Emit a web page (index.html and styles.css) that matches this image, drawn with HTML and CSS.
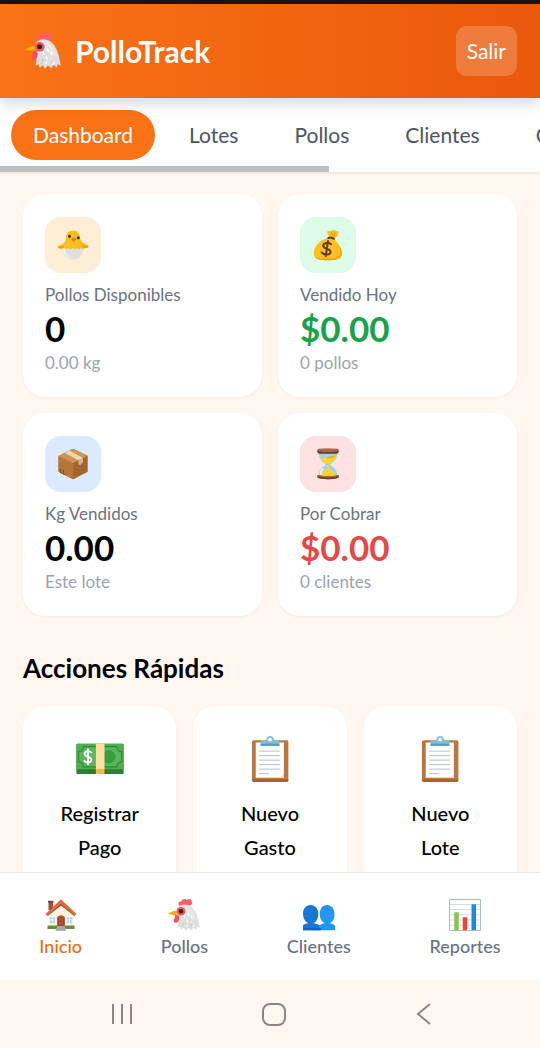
FILE: index.html
```html
<!DOCTYPE html>
<html lang="es">
<head>
    <meta charset="UTF-8">
    <meta name="viewport" content="width=device-width, initial-scale=1.0">
    <title>PolloTrack</title>
    <link rel="stylesheet" href="styles.css">
</head>
<body>
    <!-- Shared icons -->
    <svg class="sprite" aria-hidden="true">
        <symbol id="hen" viewBox="0 0 128 128">
            <path d="M46 28c-9-8-4-20 7-18 2-11 19-13 22-5 6-8 20-5 19 5 7 9-3 19-14 17z" fill="#ff5d68"/>
            <path d="M38 38c8-18 36-22 55-6 15 13 20 27 25 42 4 12 6 25 9 42l-11-5-3 12-12-9-8 12-11-11-11 12-8-13-11 10-4-14-10 6c4-16 3-26 0-39z" fill="#dedede"/>
            <path d="M52 30c16-8 35 0 44 14 8 14 12 25 16 40-15-9-37-15-46-25z" fill="#e8e8e8"/>
            <path d="M64 66l3 10M80 58l3 7M92 68l3 9M76 84l3 9M94 90l3 8M78 104l-4 6M104 104l-4 6" stroke="#fff" stroke-width="5" stroke-linecap="round" fill="none"/>
            <path d="M96 88c2 10-2 19-8 24M62 92c2 8-2 15-7 19" stroke="#c6c6c6" stroke-width="3" fill="none"/>
            <path d="M27 62c12-2 18 4 18 13 0 11-5 20-13 20-9 0-11-9-6-17 2-4 2-8 1-16z" fill="#f44f5c"/>
            <ellipse cx="52" cy="49" rx="18" ry="17" fill="#ef5763"/>
            <path d="M0 61c9-9 21-15 34-14 4 7 2 14-3 18-9-3-20-3-31-4z" fill="#ffb300"/>
            <path d="M4 60c10 0 20 0 29-3l-1 7c-9-2-18-3-28-4z" fill="#f28c00"/>
            <circle cx="52" cy="49" r="9" fill="#372624"/>
        </symbol>
        <symbol id="chick" viewBox="0 0 128 128">
            <path d="M20 72c1 28 18 50 44 50s44-22 45-50z" fill="#e0e0e0"/>
            <path d="M31 80c3 18 12 30 26 36-13 0-33-14-37-42z" fill="#f5f5f5"/>
            <path d="M36 40C36 18 46 6 64 6s28 12 28 32c4 14 16 20 33 28 4 9-8 13-15 9-3 7-11 7-15 1-4 7-12 7-16 0-4 6-12 6-16 0-5 7-13 7-17 0-4 6-12 6-16 0-8 5-29 3-27-7 16-6 30-12 33-29z" fill="#fdbf1c"/>
            <path d="M3 70c9 1 19-1 27-6l-4 11c-9 5-25 4-23-5zm122-3c-9 1-19-1-27-6l5 12c9 5 24 3 22-6z" fill="#f59e0b"/>
            <circle cx="50" cy="29" r="6" fill="#3b2c28"/>
            <circle cx="85" cy="35" r="6" fill="#3b2c28"/>
            <path d="M56 40c7-6 16-5 21 2-5 3-8 9-11 9s-6-6-10-11z" fill="#ff6d2e"/>
        </symbol>
        <symbol id="moneybag" viewBox="0 0 128 128">
            <path d="M68 32c-3-8-11-20-5-24 5-4 10 3 15-1 5-5 10-6 15 0 4 4 9-1 12 3 3 6-2 9-2 14 1 5-3 8-8 9l-5 9z" fill="#fdc01f"/>
            <path d="M77 12l8 17M92 13l-4 18" stroke="#d59a12" stroke-width="4" fill="none"/>
            <path d="M64 36c-27 5-58 31-57 61 0 20 12 28 55 28 40 0 57-5 57-27 0-28-17-43-31-58z" fill="#fdc01f"/>
            <path d="M108 67c7 10 11 20 11 31 0 22-17 27-57 27-26 0-41-3-49-11 35 8 91 9 97-10 3-11 1-26-2-37z" fill="#f3a51c"/>
            <path d="M63 33c8-6 20-3 28 4 3 3 0 8-4 6-8-4-14-5-21-3-5 1-7-4-3-7z" fill="#68423a"/>
            <path d="M76 61c-10-9-29-7-31 5-2 16 28 10 29 25 1 14-24 15-35 3M64 48l-9 60" stroke="#5d3b33" stroke-width="8" stroke-linecap="round" fill="none"/>
        </symbol>
        <symbol id="box" viewBox="0 0 128 128">
            <path d="M64 3l58 28v64l-58 30L6 95V32z" fill="#ba793e"/>
            <path d="M6 32l58 28v65L6 95z" fill="#b87436"/>
            <path d="M122 31L64 60v65l58-30z" fill="#a36631"/>
            <path d="M64 3l58 28-58 29L6 32z" fill="#ce9254"/>
            <path d="M49 10L32 20l54 29 18-9z" fill="#f3d7ac"/>
            <path d="M86 49l18-9v20l-6 1-4 7-8-2z" fill="#d6b591"/>
            <path d="M15 83v14M26 87v15M12 98l20 9" stroke="#775033" stroke-width="4" fill="none"/>
        </symbol>
        <symbol id="hourglass" viewBox="0 0 128 128">
            <path d="M27 18h74c0 22-9 34-26 44v8c17 10 27 22 27 45H26c0-23 9-35 27-45v-8C36 52 27 40 27 18z" fill="#9bd2ec"/>
            <path d="M34 41l62-11c-2 17-11 24-27 32H59c-13-6-21-11-25-21zM61 65h6l3 19c13 8 23 15 27 29H31c5-15 16-22 28-29z" fill="#fed22f"/>
            <path d="M52 37l43-7c-5 10-23 14-43 7z" fill="#e5ae21"/>
            <path d="M43 84c-6 6-8 12-8 20" stroke="#e1f4fd" stroke-width="8" fill="none" stroke-linecap="round"/>
            <rect x="21" y="3" width="86" height="20" rx="9" fill="#5e4038"/>
            <ellipse cx="64" cy="9" rx="42" ry="7" fill="#af6840"/>
            <path d="M21 109c20 7 66 7 86 0v9c-12 10-74 10-86 0z" fill="#6b4336"/>
            <path d="M22 107c23 7 61 7 84 0v5c-20 7-64 7-84 0z" fill="#b46b43"/>
        </symbol>
        <symbol id="banknote" viewBox="0 0 128 128">
            <rect x="1" y="23" width="126" height="81" rx="3" fill="#2e7d32"/>
            <rect x="1" y="23" width="126" height="68" rx="3" fill="#4caf50"/>
            <path d="M20 31h89c0 8 5 13 13 14v26c-8 1-13 6-13 14H20c0-8-5-13-13-14V45c8-1 13-6 13-14z" fill="#58b65b" stroke="#2f8735" stroke-width="3"/>
            <circle cx="87" cy="58" r="18" fill="#389d42"/>
            <path d="M53 23h23v68H53z" fill="#ffe0a0"/>
            <path d="M53 91h23v13H53z" fill="#ffb74d"/>
            <path d="M41 47c-6-6-17-5-18 3-1 10 18 6 18 16 0 9-13 9-19 3M32 38v40" stroke="#fff" stroke-width="5" stroke-linecap="round" fill="none"/>
        </symbol>
        <symbol id="clipboard" viewBox="0 0 128 128">
            <rect x="16" y="14" width="97" height="111" rx="5" fill="#bd753f"/>
            <path d="M16 118h97v2c0 3-2 5-5 5H21c-3 0-5-2-5-5z" fill="#a9622f"/>
            <path d="M26 20h75v94H26z" fill="#fff"/>
            <path d="M91 114l10-10v10z" fill="#e0e0e0"/>
            <path d="M35 43h56M35 55h56M35 67h56M35 79h56M35 91h56M35 103h26" stroke="#aebdc7" stroke-width="2.500"/>
            <path d="M39 18c0-4 3-5 8-5h7c1-14 20-14 21 0h8c4 0 6 2 6 6v10H39z" fill="#82bfd1"/>
            <path d="M39 23h50v6H39z" fill="#5d9eb5"/>
            <circle cx="64" cy="12" r="5" fill="#fff"/>
        </symbol>
        <symbol id="house" viewBox="0 0 128 128">
            <path d="M14 10h18v34H14z" fill="#ad4c35"/>
            <path d="M12 7h22v8H12z" fill="#6d4c41"/>
            <path d="M15 60l49-48 50 48v59H15z" fill="#fff3dc"/>
            <path d="M10 106h108v14H10z" fill="#6b8e32"/>
            <path d="M64 1l62 59-6 6-56-48L8 66l-6-6z" fill="#de6a3c"/>
            <path d="M8 66l56-48 56 48-3 2-53-42L11 68z" fill="#9e4330"/>
            <path d="M48 111V76c0-15 32-15 32 0v35z" fill="#b95c39"/>
            <path d="M54 105V79c3-8 17-8 20 0v26zM64 73v32M54 88h20" stroke="#8b3e2b" stroke-width="3" fill="none"/>
            <path d="M17 70h25v29H17zM86 70h25v29H86z" fill="#a5dbe1" stroke="#fff" stroke-width="3"/>
            <path d="M29 70v29M17 84h25M98 70v29M86 84h25" stroke="#fff" stroke-width="3"/>
            <path d="M48 108h32v8h4v11H43v-11h5z" fill="#a6a6a6"/>
        </symbol>
        <symbol id="people" viewBox="0 0 128 128">
            <path d="M0 125v-17c1-8 12-9 21-11C8 91 0 78 0 59 0 38 12 24 30 24s31 14 31 35c0 20-8 33-20 38 9 2 23 3 30 12v16z" fill="#1976d2"/>
            <path d="M65 125v-17c4-8 15-9 21-12-12-5-19-17-19-35 0-22 11-37 29-37s30 15 30 37c0 18-7 31-19 36 8 2 20 4 21 13v15z" fill="#2196f3"/>
            <path d="M0 116h71v9H0z" fill="#1565c0"/>
        </symbol>
        <symbol id="chart" viewBox="0 0 128 128">
            <path d="M2 2h124v124H2z" fill="#fff" stroke="#90a4ae" stroke-width="3"/>
            <path d="M3 22h122M3 42h122M3 63h122M3 84h122M3 105h122" stroke="#b0bec5" stroke-width="2"/>
            <path d="M21 53h18v71H21z" fill="#8bc34a"/>
            <path d="M55 73h18v51H55z" fill="#f44336"/>
            <path d="M90 21h18v103H90z" fill="#1e88e5"/>
        </symbol>
    </svg>

    <div class="app">
        <header class="header">
            <h1 class="logo"><svg class="logo-icon"><use href="#hen"/></svg>PolloTrack</h1>
            <button type="button" class="logout">Salir</button>
        </header>

        <nav class="tabs">
            <button type="button" class="tab active">Dashboard</button>
            <button type="button" class="tab">Lotes</button>
            <button type="button" class="tab">Pollos</button>
            <button type="button" class="tab">Clientes</button>
            <button type="button" class="tab">C</button>
            <div class="scroll-thumb"></div>
        </nav>

        <main class="content">
            <section class="stats">
                <div class="stat-card">
                    <div class="stat-icon orange"><svg><use href="#chick"/></svg></div>
                    <div class="stat-label">Pollos Disponibles</div>
                    <div class="stat-value">0</div>
                    <div class="stat-sub">0.00 kg</div>
                </div>
                <div class="stat-card">
                    <div class="stat-icon green"><svg><use href="#moneybag"/></svg></div>
                    <div class="stat-label">Vendido Hoy</div>
                    <div class="stat-value text-green">$0.00</div>
                    <div class="stat-sub">0 pollos</div>
                </div>
                <div class="stat-card">
                    <div class="stat-icon blue"><svg><use href="#box"/></svg></div>
                    <div class="stat-label">Kg Vendidos</div>
                    <div class="stat-value">0.00</div>
                    <div class="stat-sub">Este lote</div>
                </div>
                <div class="stat-card">
                    <div class="stat-icon red"><svg><use href="#hourglass"/></svg></div>
                    <div class="stat-label">Por Cobrar</div>
                    <div class="stat-value text-red">$0.00</div>
                    <div class="stat-sub">0 clientes</div>
                </div>
            </section>

            <h2>Acciones Rápidas</h2>
            <section class="actions">
                <button type="button" class="action"><svg><use href="#banknote"/></svg>Registrar Pago</button>
                <button type="button" class="action"><svg><use href="#clipboard"/></svg>Nuevo<br>Gasto</button>
                <button type="button" class="action"><svg><use href="#clipboard"/></svg>Nuevo<br>Lote</button>
            </section>
        </main>

        <nav class="bottom-nav">
            <a href="#inicio" class="active"><svg><use href="#house"/></svg>Inicio</a>
            <a href="#pollos"><svg><use href="#hen"/></svg>Pollos</a>
            <a href="#clientes"><svg><use href="#people"/></svg>Clientes</a>
            <a href="#reportes"><svg><use href="#chart"/></svg>Reportes</a>
        </nav>

        <div class="system-bar">
            <button type="button" aria-label="Recientes"><svg width="24" height="24" viewBox="0 0 24 24"><path d="M5 2v20M14 2v20M23 2v20"/></svg></button>
            <button type="button" aria-label="Inicio"><svg width="24" height="24" viewBox="0 0 24 24"><rect x="1" y="2" width="22" height="21" rx="7"/></svg></button>
            <button type="button" aria-label="Atrás"><svg width="16" height="24" viewBox="0 0 16 24"><path d="M14 2L2 12l12 10"/></svg></button>
        </div>
    </div>
</body>
</html>
```
FILE: styles.css
```css
* {
    box-sizing: border-box;
}
body {
    margin: 0;
    font-family: Lato, "Open Sans", sans-serif;
    background-color: #fff7f0;
    color: #000;
}
button {
    font-family: inherit;
    border: none;
    cursor: pointer;
}
.sprite {
    display: none;
}
.app {
    display: flex;
    flex-direction: column;
    height: 100vh;
    border-top: 4px solid #15151a;
}

/* Header */
.header {
    position: relative;
    z-index: 1;
    display: flex;
    align-items: center;
    justify-content: space-between;
    padding: 22px 23px;
    background: linear-gradient(90deg, #f97316, #ea580c);
    box-shadow: 0 6px 14px rgba(0, 0, 0, 0.15);
}
.logo {
    display: flex;
    align-items: center;
    gap: 12px;
    margin: 0;
    font-size: 30px;
    line-height: 34px;
    color: #fff;
}
.logo-icon {
    width: 40px;
    height: 36px;
}
.logout {
    height: 50px;
    padding: 0 11px 2px;
    border-radius: 11px;
    background-color: rgba(255, 255, 255, 0.2);
    color: #fff;
    font-size: 21px;
}

/* Tabs */
.tabs {
    position: relative;
    display: flex;
    flex-shrink: 0;
    gap: 12px;
    padding: 12px 11px;
    overflow: hidden;
    background-color: #fff;
    box-shadow: 0 1px 3px rgba(0, 0, 0, 0.1);
}
.tab {
    flex-shrink: 0;
    height: 50px;
    padding: 0 22px 2px;
    border-radius: 25px;
    background: none;
    color: #4b5563;
    font-size: 21px;
}
.tab.active {
    background-color: #f97316;
    color: #fff;
}
.scroll-thumb {
    position: absolute;
    left: 0;
    bottom: 0;
    width: 61%;
    height: 6px;
    background-color: #c0c0c0;
}

/* Content */
.content {
    flex: 1;
    min-height: 0;
    padding: 22px 23px;
    overflow: hidden;
}
.stats {
    display: grid;
    grid-template-columns: 1fr 1fr;
    gap: 16px;
}
.stat-card, .action {
    background-color: #fff;
    border-radius: 22px;
    box-shadow: 0 1px 3px rgba(0, 0, 0, 0.06);
}
.stat-card {
    padding: 23px 22px 21px;
}
.stat-icon {
    display: flex;
    align-items: center;
    justify-content: center;
    width: 56px;
    height: 56px;
    margin-bottom: 10px;
    border-radius: 16px;
}
.stat-icon svg {
    width: 32px;
    height: 32px;
}
.orange {
    background-color: #ffedd5;
}
.green {
    background-color: #dcfce7;
}
.blue {
    background-color: #dbeafe;
}
.red {
    background-color: #fee2e2;
}
.stat-label {
    font-size: 17px;
    line-height: 24px;
    color: #6b7280;
}
.stat-value {
    font-size: 35px;
    font-weight: bold;
    line-height: 42px;
}
.text-green {
    color: #16a34a;
}
.text-red {
    color: #e54848;
}
.stat-sub {
    font-size: 17px;
    line-height: 27px;
    color: #9ca3af;
}
h2 {
    margin: 32px 0 18px;
    font-size: 26px;
    line-height: 40px;
}
.actions {
    display: grid;
    grid-template-columns: 1fr 1fr 1fr;
    gap: 17px;
}
.action {
    display: block;
    padding: 29px 22px;
    color: #000;
    font-size: 20px;
    font-weight: 500;
    line-height: 34px;
    text-align: center;
}
.action svg {
    display: block;
    width: 48px;
    height: 48px;
    margin: 0 auto 13px;
}

/* Bottom navigation */
.bottom-nav {
    display: flex;
    flex-shrink: 0;
    justify-content: space-around;
    height: 108px;
    padding-top: 26px;
    border-top: 1px solid #e5e7eb;
    background-color: #fff;
}
.bottom-nav a {
    display: flex;
    flex-direction: column;
    align-items: center;
    gap: 3px;
    color: #6b7280;
    font-size: 18px;
    font-weight: 500;
    line-height: 24px;
    text-decoration: none;
}
.bottom-nav .active {
    color: #ea6c10;
}
.bottom-nav svg {
    width: 32px;
    height: 32px;
}
.system-bar {
    display: flex;
    flex-shrink: 0;
    align-items: center;
    justify-content: space-between;
    height: 68px;
    padding: 0 20%;
}
.system-bar button {
    padding: 0;
    background: none;
}
.system-bar svg {
    display: block;
    fill: none;
    stroke: #8c8785;
    stroke-width: 2;
}
```
